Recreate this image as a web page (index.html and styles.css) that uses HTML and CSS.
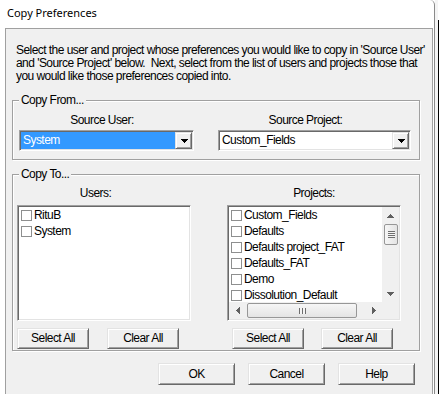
FILE: index.html
```html
<!DOCTYPE html>
<html>
<head>
<meta charset="utf-8">
<title>Copy Preferences</title>
<link rel="stylesheet" href="styles.css">
</head>
<body>
<div class="screen">
  <div class="window">
    <div class="titlebar"><span class="title">Copy Preferences</span></div>
    <div class="client">
      <p class="intro">Select the user and project whose preferences you would like to copy in 'Source User'<br>and 'Source Project' below.&nbsp; Next, select from the list of users and projects those that<br>you would like those preferences copied into.</p>

      <fieldset class="group group-from">
        <legend>Copy From...</legend>
        <div class="from-row">
          <div class="field field-user">
            <div class="label label-user">Source User:</div>
            <div class="combo">
              <span class="combo-text selected">System</span>
              <span class="combo-btn"><svg class="glyph" width="7" height="4" viewBox="0 0 7 4"><path d="M0 0h7v1H0zM1 1h5v1H1zM2 2h3v1H2zM3 3h1v1H3z"/></svg></span>
            </div>
          </div>
          <div class="field field-project">
            <div class="label label-project">Source Project:</div>
            <div class="combo">
              <span class="combo-text">Custom_Fields</span>
              <span class="combo-btn"><svg class="glyph" width="7" height="4" viewBox="0 0 7 4"><path d="M0 0h7v1H0zM1 1h5v1H1zM2 2h3v1H2zM3 3h1v1H3z"/></svg></span>
            </div>
          </div>
        </div>
      </fieldset>

      <fieldset class="group group-to">
        <legend>Copy To...</legend>
        <div class="to-row">
          <div class="col">
            <div class="label label-users">Users:</div>
            <div class="list">
              <div class="items">
                <div class="item"><span class="check"></span>RituB</div>
                <div class="item"><span class="check"></span>System</div>
              </div>
            </div>
            <div class="btn-row btn-row-users">
              <button class="btn">Select All</button>
              <button class="btn">Clear All</button>
            </div>
          </div>
          <div class="col">
            <div class="label label-projects">Projects:</div>
            <div class="list list-projects">
              <div class="items">
                <div class="item"><span class="check"></span>Custom_Fields</div>
                <div class="item"><span class="check"></span>Defaults</div>
                <div class="item"><span class="check"></span>Defaults project_FAT</div>
                <div class="item"><span class="check"></span>Defaults_FAT</div>
                <div class="item"><span class="check"></span>Demo</div>
                <div class="item"><span class="check"></span>Dissolution_Default</div>
              </div>
              <div class="vscroll">
                <span class="sb-btn"><svg class="sb-glyph" width="7" height="4" viewBox="0 0 7 4"><path d="M3 0h1v1H3zM2 1h3v1H2zM1 2h5v1H1zM0 3h7v1H0z"/></svg></span>
                <span class="thumb thumb-v"><span class="grip-v"></span></span>
                <span class="sb-space"></span>
                <span class="sb-btn"><svg class="sb-glyph" width="7" height="4" viewBox="0 0 7 4"><path d="M0 0h7v1H0zM1 1h5v1H1zM2 2h3v1H2zM3 3h1v1H3z"/></svg></span>
              </div>
              <div class="hscroll">
                <span class="sb-btn"><svg class="sb-glyph" width="4" height="7" viewBox="0 0 4 7"><path d="M0 3h1v1H0zM1 2h1v3H1zM2 1h1v5H2zM3 0h1v7H3z"/></svg></span>
                <span class="thumb thumb-h"><span class="grip-h"></span></span>
                <span class="sb-space"></span>
                <span class="sb-btn"><svg class="sb-glyph" width="4" height="7" viewBox="0 0 4 7"><path d="M0 0h1v7H0zM1 1h1v5H1zM2 2h1v3H2zM3 3h1v1H3z"/></svg></span>
              </div>
              <div class="corner"></div>
            </div>
            <div class="btn-row btn-row-projects">
              <button class="btn">Select All</button>
              <button class="btn">Clear All</button>
            </div>
          </div>
        </div>
      </fieldset>

      <div class="dialog-buttons">
        <button class="btn btn-dlg">OK</button>
        <button class="btn btn-dlg">Cancel</button>
        <button class="btn btn-dlg">Help</button>
      </div>
    </div>
  </div>
  <div class="strip">
    <div class="strip-gap"></div>
    <div class="strip-line"></div>
    <div class="strip-ticks"></div>
  </div>
</div>
</body>
</html>
```

FILE: styles.css
```css
html, body {
  margin: 0;
  padding: 0;
}

body {
  width: 441px;
  height: 394px;
  overflow: hidden;
  background: #ffffff;
  font-family: "Liberation Sans", Arial, sans-serif;
  font-size: 12px;
  letter-spacing: -0.55px;
  color: #000000;
}

.screen {
  display: flex;
  height: 394px;
}

.window {
  width: 435px;
  box-sizing: border-box;
  background: #ffffff;
  border-right: 1px solid #8a8a8a;
  border-top-right-radius: 5px;
  padding: 0 1px 0 5px;
  display: flex;
  flex-direction: column;
}

.titlebar {
  height: 28px;
  box-sizing: border-box;
  padding: 5px 0 0 2px;
  font-family: "Noto Sans", "Open Sans", sans-serif;
  font-size: 11px;
  letter-spacing: 0;
  line-height: 15px;
  color: #000000;
}

.client {
  flex: 1;
  border: 1px solid #a0a0a0;
  border-bottom: none;
  background: #f0f0f0;
  padding: 15px 12px 0 6px;
}

.intro {
  margin: 0 0 0 4px;
  line-height: 13px;
  white-space: nowrap;
}

.group {
  margin: 0;
  border: 1px solid #a0a0a0;
  box-shadow: inset 1px 1px 0 #ffffff, 1px 1px 0 #ffffff;
  min-width: 0;
}

.group legend {
  padding: 0 2px;
  line-height: 13px;
  background: #f0f0f0;
}

.group-from {
  margin-top: 11px;
  padding: 0 8px 8px 6px;
}

.group-to {
  margin-top: 8px;
  padding: 0 8px 1px 4px;
}

.group-to legend {
  margin-left: 2px;
}

.label {
  line-height: 13px;
  text-align: center;
  white-space: nowrap;
}

/* Copy From */
.from-row {
  display: flex;
  gap: 24px;
}

.field {
  display: flex;
  flex-direction: column;
}

.field-user { width: 175px; }
.field-project { width: 193px; }

.field .label {
  margin-top: 7px;
  margin-bottom: 3px;
}

.label-user { padding-right: 9px; }
.label-project { padding-right: 18px; }

.combo {
  height: 21px;
  box-sizing: border-box;
  border: 1px solid;
  border-color: #a0a0a0 #ffffff #ffffff #a0a0a0;
  box-shadow: inset 1px 1px 0 #696969, inset -1px -1px 0 #e3e3e3;
  background: #ffffff;
  padding: 1px;
  display: flex;
}

.combo-text {
  flex: 1;
  line-height: 17px;
  padding-left: 2px;
  white-space: nowrap;
  overflow: hidden;
}

.combo-text.selected {
  background: #3399ff;
  color: #ffffff;
}

.combo-btn {
  width: 17px;
  box-sizing: border-box;
  border: 1px solid;
  border-color: #e3e3e3 #696969 #696969 #e3e3e3;
  box-shadow: inset 1px 1px 0 #ffffff, inset -1px -1px 0 #a0a0a0;
  background: #f0f0f0;
  display: flex;
  align-items: center;
  justify-content: center;
  padding-left: 1px;
}

.glyph {
  display: block;
  fill: #000000;
}

/* Copy To */
.to-row {
  display: flex;
  gap: 36px;
}

.col {
  width: 174px;
  display: flex;
  flex-direction: column;
}

.col .label {
  margin-top: 6px;
  margin-bottom: 5px;
}

.label-users { padding-right: 17px; }

.list {
  height: 116px;
  box-sizing: border-box;
  border: 1px solid;
  border-color: #a0a0a0 #ffffff #ffffff #a0a0a0;
  box-shadow: inset 1px 1px 0 #696969, inset -1px -1px 0 #e3e3e3;
  background: #ffffff;
  padding: 1px;
}

.items {
  overflow: hidden;
}

.item {
  height: 16px;
  display: flex;
  align-items: center;
  padding-left: 2px;
  white-space: nowrap;
  line-height: 16px;
}

.check {
  flex: none;
  width: 11px;
  height: 11px;
  box-sizing: border-box;
  border: 1px solid #8e8f8f;
  background: #ffffff;
  margin-right: 2px;
}

.list-projects {
  display: grid;
  grid-template-columns: 1fr 17px;
  grid-template-rows: 1fr 17px;
}

.vscroll {
  display: flex;
  flex-direction: column;
  background: #f0f0f0;
}

.hscroll {
  display: flex;
  background: #f0f0f0;
}

.corner {
  background: #f0f0f0;
}

.sb-btn {
  flex: none;
  width: 17px;
  height: 17px;
  display: flex;
  align-items: center;
  justify-content: center;
}

.sb-glyph {
  display: block;
  fill: #606060;
}

.sb-space {
  flex: 1;
}

.thumb {
  flex: none;
  box-sizing: border-box;
  border: 1px solid #979797;
  border-radius: 2px;
  display: flex;
  align-items: center;
  justify-content: center;
}

.thumb-v {
  height: 21px;
  margin: 0 1px 0 2px;
  background: linear-gradient(to right, #f6f6f6, #e4e4e4);
}

.thumb-h {
  width: 110px;
  margin: 1px 0 1px 1px;
  background: linear-gradient(to bottom, #f6f6f6, #e4e4e4);
}

.grip-v {
  width: 7px;
  height: 7px;
  background: repeating-linear-gradient(to bottom, #6e6e6e 0, #6e6e6e 1px, #f4f4f4 1px, #f4f4f4 2px);
}

.grip-h {
  width: 7px;
  height: 6px;
  background: repeating-linear-gradient(to right, #6e6e6e 0, #6e6e6e 1px, #f4f4f4 1px, #f4f4f4 3px);
}

/* Buttons */
.btn {
  font: inherit;
  letter-spacing: inherit;
  color: #000000;
  background: #f0f0f0;
  border: 1px solid;
  border-color: #e3e3e3 #696969 #696969 #e3e3e3;
  box-shadow: inset 1px 1px 0 #ffffff, inset -1px -1px 0 #a0a0a0;
  padding: 0;
  margin: 0;
  line-height: 17px;
  box-sizing: border-box;
}

.btn-row {
  display: flex;
  margin-top: 7px;
}

.btn-row .btn {
  width: 72px;
  height: 21px;
}

.btn-row-users { gap: 18px; }
.btn-row-projects { gap: 17px; padding-left: 5px; }

.dialog-buttons {
  display: flex;
  justify-content: flex-end;
  gap: 13px;
  margin-top: 12px;
  padding-right: 5px;
}

.btn-dlg {
  width: 77px;
  height: 22px;
}

/* Background window peeking at right edge */
.strip {
  flex: 1;
  display: flex;
  background: #ffffff;
}

.strip-gap {
  width: 3px;
  background: #f4f4f4;
}

.strip-line {
  width: 1px;
  margin-top: 20px;
  background: #000000;
}

.strip-ticks {
  flex: 1;
  background: repeating-linear-gradient(to bottom, #ffffff 0, #ffffff 20px, #000000 20px, #000000 21px);
  background-size: 100% 20px;
  background-position: 0 2px;
}
```
